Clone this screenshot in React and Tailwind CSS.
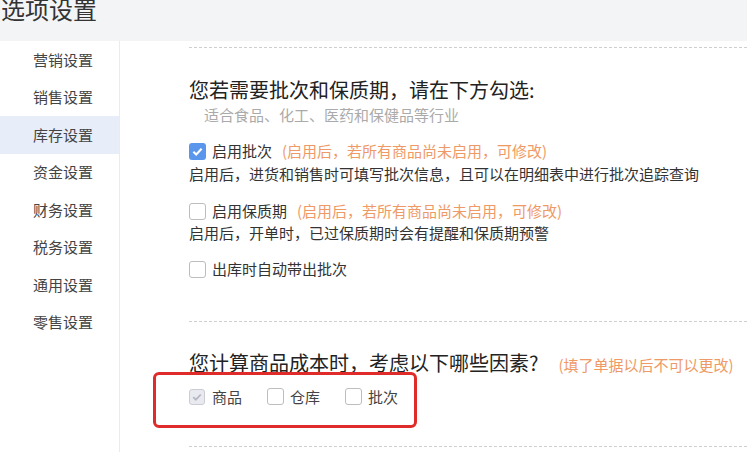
import React from 'react';

const menu = ["营销设置", "销售设置", "库存设置", "资金设置", "财务设置", "税务设置", "通用设置", "零售设置"];

function Box({ checked, disabled }) {
    if (disabled) {
        return (
            <span className="w-[16px] h-[16px] rounded-[3px] border border-[#c9ccd6] bg-[#e9eaf0] flex items-center justify-center shrink-0">
                <svg width="12" height="12" viewBox="0 0 12 12"><path d="M2.2 6.2l2.6 2.5 5-5.2" fill="none" stroke="#b3b7c4" strokeWidth="1.8" /></svg>
            </span>
        );
    }
    if (checked) {
        return (
            <span className="w-[17px] h-[17px] rounded-[3px] bg-[#5a97ec] flex items-center justify-center shrink-0">
                <svg width="13" height="13" viewBox="0 0 12 12"><path d="M2.2 6.2l2.6 2.5 5-5.2" fill="none" stroke="#fff" strokeWidth="1.9" /></svg>
            </span>
        );
    }
    return <span className="block w-[17px] h-[17px] rounded-[3px] border border-[#bdbdbd] bg-white shrink-0" />;
}

function App() {
    return (
        <div className="w-[747px] h-[452px] overflow-hidden flex flex-col bg-white font-['Noto_Sans_CJK_SC',sans-serif] text-[#333]">
            <div className="h-[41px] bg-[#f3f4f6] shrink-0 overflow-hidden">
                <div className="-mt-[3px] text-[24px] leading-[24px] text-[#333] pl-[1px]">选项设置</div>
            </div>
            <div className="flex flex-1">
                <div className="w-[120px] border-r border-[#ebebeb] shrink-0">
                    {menu.map((m) => (
                        <div
                            key={m}
                            className={`h-[37.5px] flex items-center pl-[33px] text-[15px] text-[#444] ${m === "库存设置" ? "bg-[#e7eefa]" : ""}`}
                        >
                            {m}
                        </div>
                    ))}
                </div>
                <div className="relative flex-1 pl-[69px]">
                    <div className="mt-[6px] border-t border-dashed border-[#cfcfcf]" />

                    <div className="mt-[29px] text-[20px] leading-[26px] text-[#222]">您若需要批次和保质期，请在下方勾选:</div>
                    <div className="mt-[2px] pl-[15px] text-[15px] leading-[20px] text-[#aaa]">适合食品、化工、医药和保健品等行业</div>

                    <div className="mt-[16px] flex items-center text-[15px] leading-[20px]">
                        <Box checked />
                        <span className="ml-[6px] text-[#333]">启用批次</span>
                        <span className="ml-[10px] text-[#ef9a66]">(启用后，若所有商品尚未启用，可修改)</span>
                    </div>
                    <div className="mt-[3px] text-[15px] leading-[20px] text-[#333]">启用后，进货和销售时可填写批次信息，且可以在明细表中进行批次追踪查询</div>

                    <div className="mt-[17px] flex items-center text-[15px] leading-[20px]">
                        <Box />
                        <span className="ml-[6px] text-[#333]">启用保质期</span>
                        <span className="ml-[10px] text-[#ef9a66]">(启用后，若所有商品尚未启用，可修改)</span>
                    </div>
                    <div className="mt-[2px] text-[15px] leading-[20px] text-[#333]">启用后，开单时，已过保质期时会有提醒和保质期预警</div>

                    <div className="mt-[16px] flex items-center text-[15px] leading-[20px]">
                        <Box />
                        <span className="ml-[6px] text-[#333]">出库时自动带出批次</span>
                    </div>

                    <div className="mt-[42px] border-t border-dashed border-[#cfcfcf]" />

                    <div className="mt-[28px] flex items-baseline">
                        <span className="text-[20px] leading-[26px] text-[#222]">您计算商品成本时，考虑以下哪些因素?</span>
                        <span className="ml-[20px] text-[15px] text-[#ef9a66]">(填了单据以后不可以更改)</span>
                    </div>

                    <div className="mt-[10px] flex items-center text-[15px] leading-[20px] text-[#444]">
                        <Box disabled />
                        <span className="ml-[7px]">商品</span>
                        <span className="ml-[25px] flex"><Box /></span>
                        <span className="ml-[6px]">仓库</span>
                        <span className="ml-[25px] flex"><Box /></span>
                        <span className="ml-[6px]">批次</span>
                    </div>

                    <div className="mt-[39px] border-t border-dashed border-[#cfcfcf]" />

                    <div className="absolute left-[33px] top-[331px] w-[264px] h-[56px] border-[3px] border-[#e02b2b] rounded-[6px]" />
                </div>
            </div>
        </div>
    );
}

export default App;
